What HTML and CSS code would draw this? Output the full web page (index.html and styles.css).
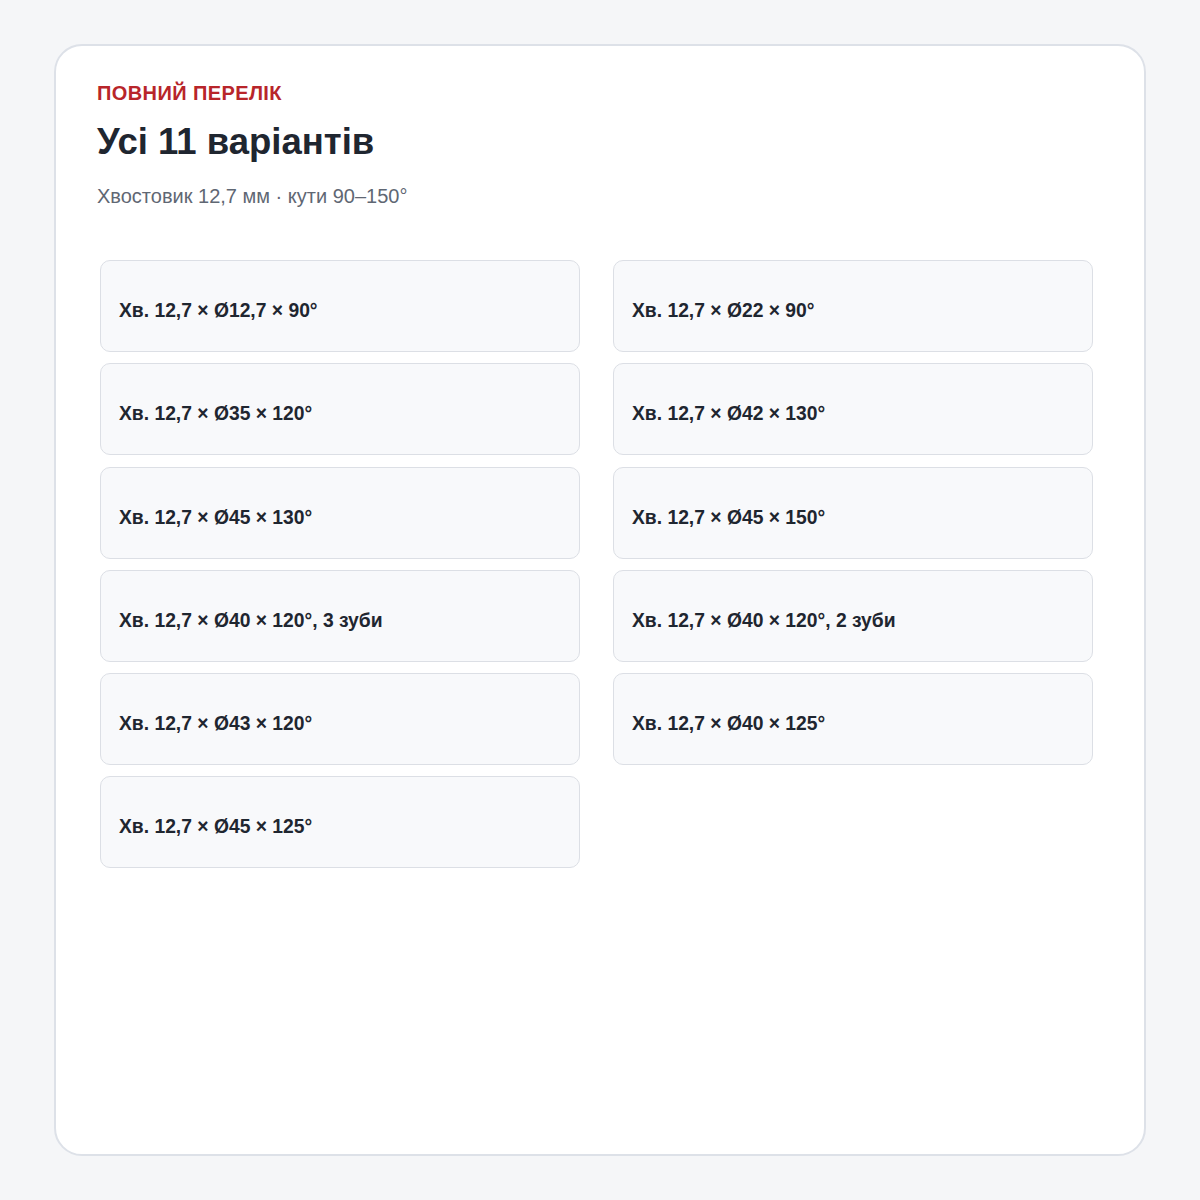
FILE: index.html
```html
<!DOCTYPE html>
<html lang="uk">
<head>
    <meta charset="UTF-8">
    <meta name="viewport" content="width=device-width, initial-scale=1.0">
    <title>Усі 11 варіантів</title>
    <link rel="stylesheet" href="styles.css">
</head>
<body>

<div class="panel">
    <div class="eyebrow">ПОВНИЙ ПЕРЕЛІК</div>
    <h1 class="title">Усі 11 варіантів</h1>
    <p class="subtitle">Хвостовик 12,7 мм · кути 90–150°</p>

    <div class="grid">
        <div class="item">Хв. 12,7 × Ø12,7 × 90°</div>
        <div class="item">Хв. 12,7 × Ø22 × 90°</div>
        <div class="item">Хв. 12,7 × Ø35 × 120°</div>
        <div class="item">Хв. 12,7 × Ø42 × 130°</div>
        <div class="item">Хв. 12,7 × Ø45 × 130°</div>
        <div class="item">Хв. 12,7 × Ø45 × 150°</div>
        <div class="item">Хв. 12,7 × Ø40 × 120°, 3 зуби</div>
        <div class="item">Хв. 12,7 × Ø40 × 120°, 2 зуби</div>
        <div class="item">Хв. 12,7 × Ø43 × 120°</div>
        <div class="item">Хв. 12,7 × Ø40 × 125°</div>
        <div class="item">Хв. 12,7 × Ø45 × 125°</div>
    </div>
</div>

</body>
</html>
```

FILE: styles.css
```css
body {
    font-family: "Liberation Sans", Arial, sans-serif;
    margin: 0;
    padding: 44px 54px;
    background-color: #f5f6f8;
    color: #1f2630;
}
.panel {
    box-sizing: border-box;
    height: 1112px;
    background-color: #ffffff;
    border: 2px solid #dde1e8;
    border-radius: 28px;
    padding: 35px 41px;
}
.eyebrow {
    font-size: 20px;
    line-height: 24px;
    font-weight: bold;
    letter-spacing: 0.4px;
    color: #b8252a;
}
.title {
    margin: 15px 0 0;
    font-size: 36.5px;
    line-height: 43px;
    font-weight: bold;
    color: #1f2630;
}
.subtitle {
    margin: 19px 0 0;
    font-size: 20px;
    line-height: 28px;
    color: #5f6773;
}
.grid {
    display: grid;
    grid-template-columns: repeat(2, 480px);
    column-gap: 33px;
    row-gap: 11.3px;
    margin: 50px 0 0 3px;
}
.item {
    box-sizing: border-box;
    height: 92px;
    display: flex;
    align-items: center;
    padding: 10px 18px 0;
    background-color: #f8f9fb;
    border: 1px solid #dcdfe5;
    border-radius: 10px;
    font-size: 19.3px;
    font-weight: bold;
    color: #1f2630;
}
```
